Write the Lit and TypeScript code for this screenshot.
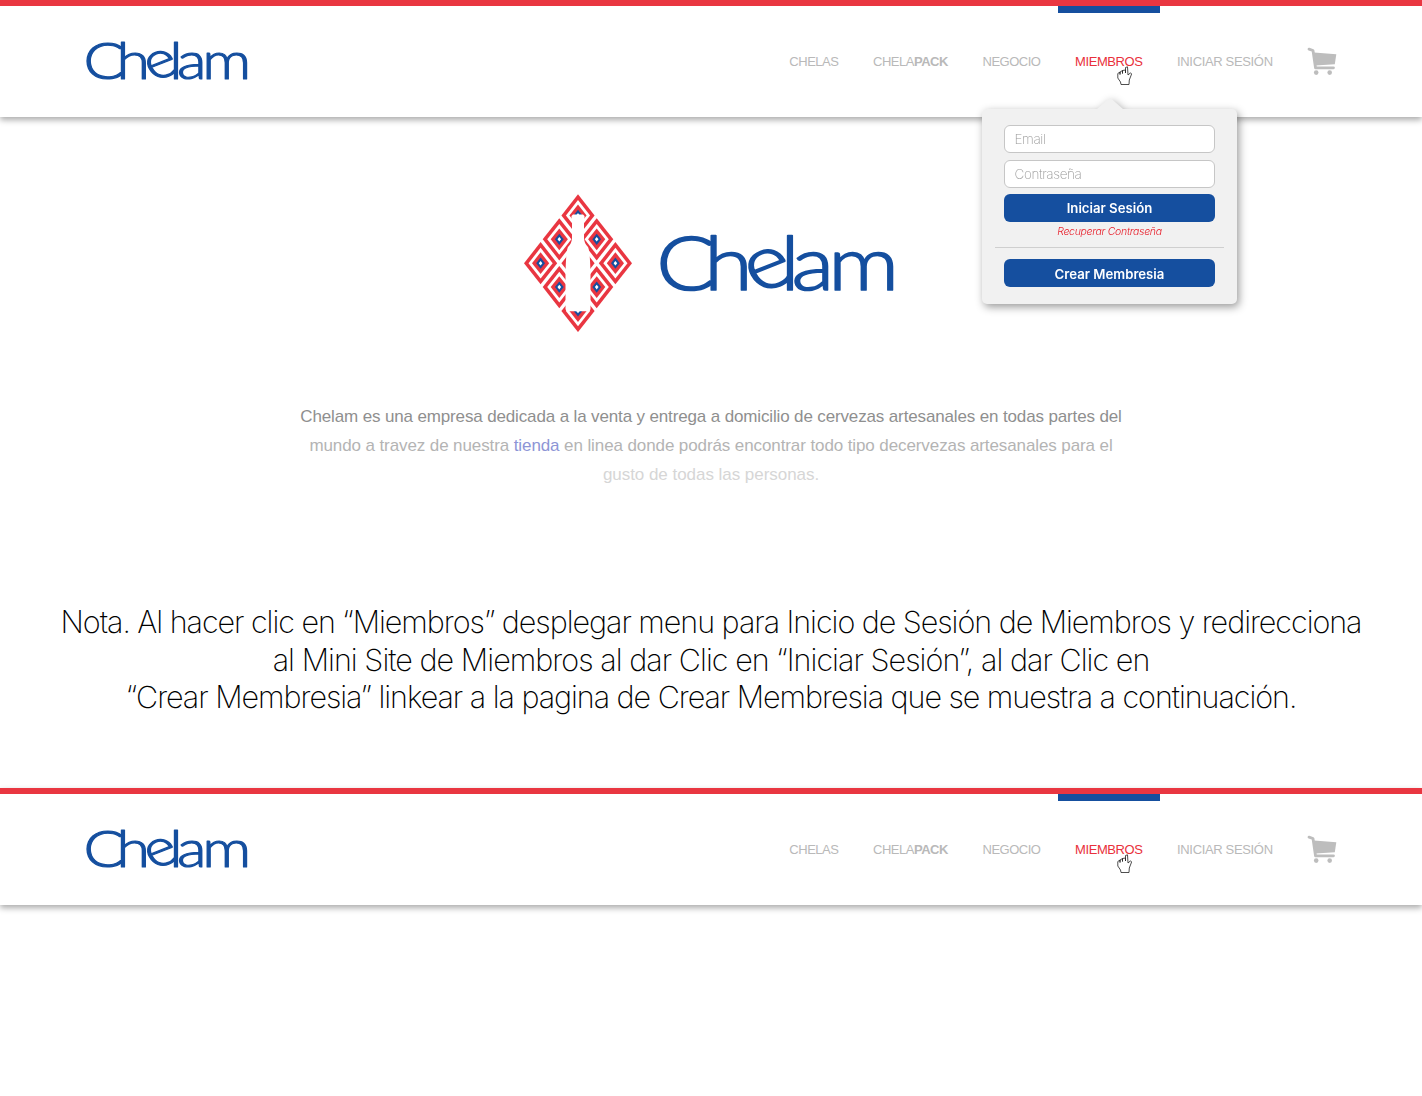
import { LitElement, html, css, svg } from "lit";
import { customElement, property } from "lit/decorators.js";

@customElement("chelam-wordmark")
class ChelamWordmark extends LitElement {
  static styles = css`
    :host { display: block; }
    svg { display: block; width: 100%; height: auto; overflow: visible; }
    .name { font-family: Lato, "Liberation Sans", sans-serif; font-size: 74.500px; font-weight: 300; fill: #154f9f; stroke: #154f9f; stroke-width: 1.7px; stroke-linejoin: round; }
  `;
  render() {
    return html`<svg viewBox="0 0 240 60" role="img">
      <text class="name" transform="scale(1.18 1)" x="-3.2 37.500 82.500 102 111.500 142.500" y="55.3 55.3 59.300 55.3 55.3 55.3" rotate="0 0 -25 0 0 0">Chelam</text>
    </svg>`;
  }
}

@customElement("chelam-emblem")
class ChelamEmblem extends LitElement {
  static styles = css`
    :host { display: block; width: 108px; height: 138px; }
    svg { display: block; }
    .red { fill: #e93641; }
    .blue { fill: #154f9f; }
    .white { fill: #fff; }
  `;
  diamond(x: number, y: number, r: number, cls: string) {
    const h = r * 1.27;
    return svg`<polygon class=${cls} points="${x},${y - h} ${x + r},${y} ${x},${y + h} ${x - r},${y}"></polygon>`;
  }
  render() {
    const cells: number[][] = [];
    for (let i = 0; i < 3; i++) for (let j = 0; j < 3; j++) cells.push([54 + (i - j) * 18.7, 21.4 + (i + j) * 23.9]);
    const layers: [number, string][] = [[16.6, "red"], [12.1, "white"], [8.6, "red"], [4.4, "blue"], [1.8, "white"]];
    return html`<svg width="108" height="138" viewBox="0 0 108 138">
      ${cells.map(([x, y]) => layers.map(([r, c]) => this.diamond(x, y, r, c)))}
      <path class="white" d="M49 20.500H59L60.500 22V25L60 26V44Q60 49 64 53Q66 57 66.500 79V115Q66.500 117.200 64 117.200H44Q41.500 117.200 41.500 115V79Q42 57 44 53Q48 49 48 44V26L47.500 25V22Z"/>
    </svg>`;
  }
}

@customElement("login-popover")
class LoginPopover extends LitElement {
  static styles = css`
    :host { display: block; width: 255px; filter: drop-shadow(2px 3px 4px rgba(0,0,0,.4)); font-family: "Liberation Sans", Arial, sans-serif; }
    .arrow { width: 26px; height: 11px; margin: 0 0 0 115px; background: #f1f1f1; clip-path: polygon(46% 4%, 54% 4%, 100% 100%, 0 100%); }
    .panel { box-sizing: border-box; height: 194.500px; background: #f1f1f1; border-radius: 5px; padding: 16px 22px 0 22px; display: flex; flex-direction: column; }
    .field { box-sizing: border-box; height: 28px; margin-bottom: 6.500px; border: 1px solid #c6c6c6; border-radius: 6px; background: #fff; padding: 0 9.500px; display: flex; align-items: center; font-family: Inter, sans-serif; font-weight: 200; font-size: 13.500px; letter-spacing: -.4px; color: #999; }
    .button { height: 28px; border-radius: 6px; background: #154f9f; color: #fff; display: flex; align-items: center; justify-content: center; font-family: Inter, sans-serif; font-weight: 600; font-size: 13.200px; }
    .button.create { line-height: 30px; align-items: flex-start; }
    .recover { font-family: Inter, sans-serif; font-style: italic; font-weight: 300; font-size: 10.500px; letter-spacing: -.3px; line-height: 19px; text-align: center; color: #e8202c; }
    .rule { height: 1px; background: #cfcfcf; margin: 5.500px -9px 11.500px; }
  `;
  render() {
    return html`<div class="arrow"></div>
      <div class="panel">
        <div class="field">Email</div>
        <div class="field">Contraseña</div>
        <div class="button">Iniciar Sesión</div>
        <div class="recover">Recuperar Contraseña</div>
        <div class="rule"></div>
        <div class="button create">Crear Membresia</div>
      </div>`;
  }
}

@customElement("site-header")
class SiteHeader extends LitElement {
  @property({ type: Boolean }) open = false;
  static styles = css`
    :host { display: block; position: relative; font-family: "Liberation Sans", Arial, sans-serif; }
    .bar { box-sizing: border-box; height: 117px; border-top: 6px solid #e93641; background: #fff; box-shadow: 0 3px 6px rgba(0,0,0,.33); display: flex; justify-content: space-between; padding: 0 85px 0 86px; }
    .logo { width: 166px; margin-top: 35px; }
    .nav { display: flex; height: 100%; }
    .item { box-sizing: border-box; border-top: 7px solid transparent; padding: 41px 17.300px 0 17.400px; font-size: 13px; letter-spacing: -.5px; line-height: 15px; color: #b9b9b9; white-space: nowrap; }
    .item:last-of-type { letter-spacing: -.34px; }
    .item.active { border-top-color: #154f9f; color: #e9303b; letter-spacing: -.44px; }
    .cart { margin: 41px 0 0 17px; }
    .cursor { position: absolute; left: 1117px; top: 66px; }
    .popover { position: absolute; left: 982px; top: 98px; z-index: 2; }
  `;
  render() {
    return html`<div class="bar">
        <chelam-wordmark class="logo"></chelam-wordmark>
        <div class="nav">
          <div class="item">CHELAS</div>
          <div class="item">CHELA<b>PACK</b></div>
          <div class="item">NEGOCIO</div>
          <div class="item active">MIEMBROS</div>
          <div class="item">INICIAR SESIÓN</div>
          <svg class="cart" width="30" height="29" viewBox="0 0 30 29" fill="#bdbdbd">
            <path d="M2 2.200L6 3.500L8.500 20.800H26.500" fill="none" stroke="#bdbdbd" stroke-width="2.800" stroke-linecap="round" stroke-linejoin="round"/>
            <path d="M7 5.500L29.300 7.300L27.800 17.200L8.500 18.600Z"/>
            <circle cx="9.200" cy="25.600" r="2.300"/><circle cx="22.700" cy="25.600" r="2.300"/>
          </svg>
        </div>
      </div>
      <svg class="cursor" width="16" height="20" viewBox="0 0 16 20">
        <path d="M4 18.500L3.500 16L.8 12V7.500L3 6V8.500V6L5.500 4.500V7.500V4.500L8.500 4V7V1.500L10.500 .8L11 9L13.500 6.800L14.600 8L12.300 14L12 18.500Z" fill="#fff" stroke="#222" stroke-width=".8"/>
      </svg>
      ${this.open ? html`<login-popover class="popover"></login-popover>` : null}`;
  }
}

@customElement("app-root")
class AppRoot extends LitElement {
  static styles = css`
    :host { display: block; height: 1096px; background: #fff; overflow: hidden; font-family: "Liberation Sans", Arial, sans-serif; }
    .hero { display: flex; padding: 77px 0 0 524px; height: 138px; gap: 28px; }
    .brand { width: 240px; margin-top: 41px; }
    .about { margin: 70px 0 0; text-align: center; font-size: 17px; line-height: 29px; height: 87px; }
    .about div { white-space: nowrap; }
    .l1 { color: #8f8f8f; letter-spacing: -.14px; }
    .l2 { color: #b4b4b4; letter-spacing: -.1px; }
    .l3 { color: #d6d6d6; letter-spacing: -.04px; }
    .link { color: #8d95d6; }
    .note { margin-top: 114px; height: 185px; text-align: center; font-family: Inter, sans-serif; font-weight: 200; font-size: 30.500px; letter-spacing: -1.04px; line-height: 37.500px; color: #000; white-space: nowrap; }
    .n2 { letter-spacing: -.96px; }
  `;
  render() {
    return html`<site-header open></site-header>
      <div class="hero"><chelam-emblem></chelam-emblem><chelam-wordmark class="brand"></chelam-wordmark></div>
      <div class="about">
        <div class="l1">Chelam es una empresa dedicada a la venta y entrega a domicilio de cervezas artesanales en todas partes del</div>
        <div class="l2">mundo a travez de nuestra <span class="link">tienda</span> en linea donde podrás encontrar todo tipo decervezas artesanales para el</div>
        <div class="l3">gusto de todas las personas.</div>
      </div>
      <div class="note">
        <div>Nota. Al hacer clic en “Miembros” desplegar menu para Inicio de Sesión de Miembros y redirecciona</div>
        <div class="n2">al Mini Site de Miembros al dar Clic en “Iniciar Sesión”, al dar Clic en</div>
        <div>“Crear Membresia” linkear a la pagina de Crear Membresia que se muestra a continuación.</div>
      </div>
      <site-header></site-header>`;
  }
}
